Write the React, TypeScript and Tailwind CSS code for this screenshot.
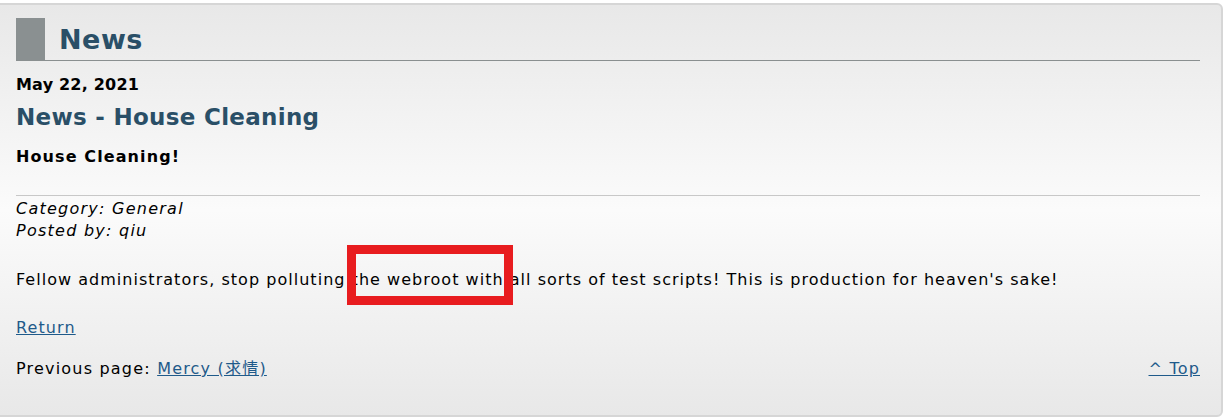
import React from "react";

export default function App() {
  const font = { fontFamily: '"DejaVu Sans", Verdana, "Noto Sans CJK SC", sans-serif' };
  return (
    <div className="relative h-[418px] w-[1227px] overflow-hidden bg-white" style={font}>
      <div className="mt-[3px] ml-[-10px] h-[414px] w-[1233px] rounded-r-[6px] border-2 border-[#d6d6d6] bg-gradient-to-b from-[#e8e8e8] via-[#fbfbfb] to-[#e8e8e8] pl-[24px] pr-[21px] pt-[13px] text-black">
        <div className="flex h-[43px] border-b border-[#8a8f90]">
          <div className="w-[29px] bg-[#8a9091]" />
          <div className="ml-[14px] self-center pt-[2px] text-[27px] font-bold leading-[32px] tracking-[0.5px] text-[#2a4f67]">News</div>
        </div>
        <div className="mt-[14px] text-[16px] font-bold leading-[20px] tracking-[0.2px]">May 22, 2021</div>
        <div className="mt-[7px] text-[23px] font-bold leading-[30px] tracking-[0.3px] text-[#2a4f67]">News - House Cleaning</div>
        <div className="mt-[15px] text-[16px] font-bold leading-[20px] tracking-[1.1px]">House Cleaning!</div>
        <div className="mt-[28px] h-px bg-[#c8c8c8]" />
        <div className="mt-[2px] text-[16px] italic leading-[22px] tracking-[1.25px]">
          <div>Category: General</div>
          <div>Posted by: qiu</div>
        </div>
        <p className="mt-[27px] text-[16px] leading-[22px] tracking-[1.03px]">
          Fellow administrators, stop polluting the webroot with all sorts of test scripts! This is production for heaven's sake!
        </p>
        <div className="mt-[26px] text-[16px] leading-[22px] tracking-[1.1px]">
          <a href="#" className="text-[#1f5a8a] underline">Return</a>
        </div>
        <div className="mt-[19px] flex justify-between text-[16px] leading-[22px] tracking-[1.2px]">
          <div>
            Previous page: <a href="#" className="text-[#1f5a8a] underline">Mercy (求情)</a>
          </div>
          <a href="#" className="text-[#1f5a8a] underline">^ Top</a>
        </div>
      </div>
      <div className="absolute left-[347px] top-[245px] h-[60px] w-[166px] border-[9px] border-[#e81c1f]" />
    </div>
  );
}
